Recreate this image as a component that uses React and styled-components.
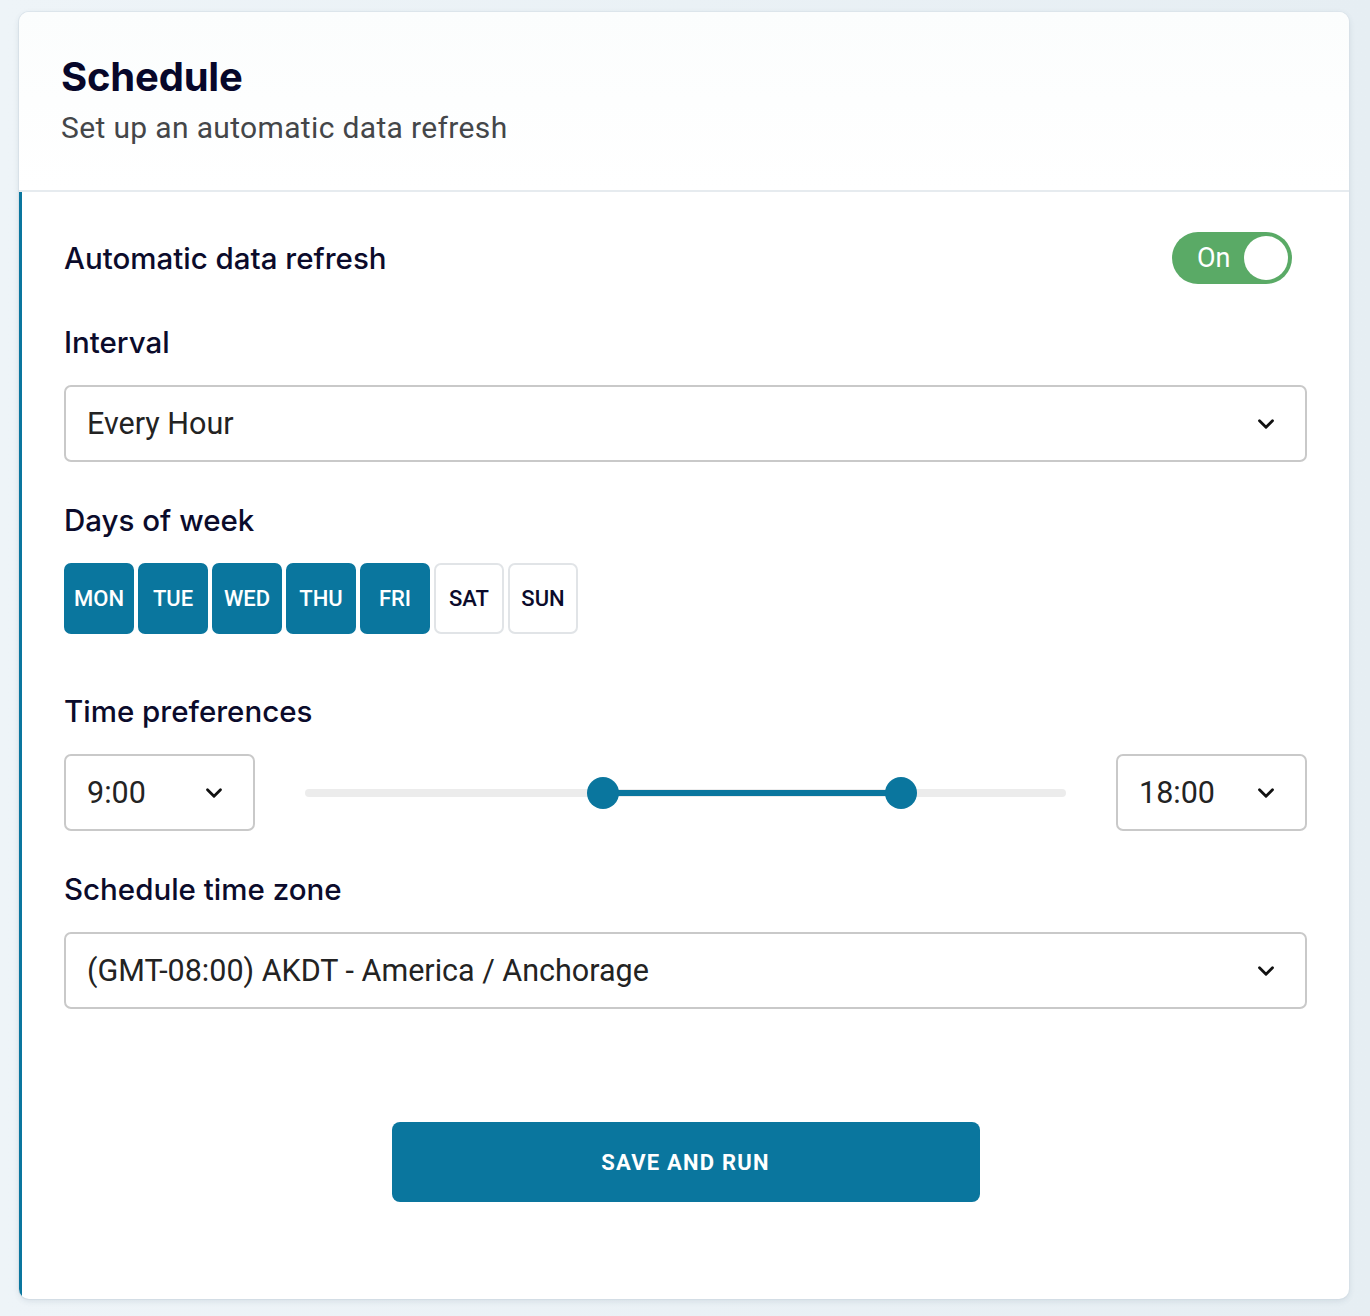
import React from "react";
import styled, { createGlobalStyle } from "styled-components";
import { ChevronDown } from "lucide-react";

const GlobalStyle = createGlobalStyle`
  html, body { margin: 0; padding: 0; }
  body {
    background: linear-gradient(90deg, #eef4f8 0%, #e6eef3 100%);
    font-family: Roboto, "Noto Sans", sans-serif;
  }
  * { box-sizing: border-box; }
`;

const Page = styled.div`
  padding: 12px 21px 18px 19px;
`;

const Card = styled.div`
  background: #ffffff;
  border-radius: 10px;
  box-shadow: 0 2px 6px rgba(40, 70, 100, 0.12), 0 0 0 1px #e2eaf0;
  overflow: hidden;
`;

const Header = styled.div`
  padding: 40px 42px 36px 42px;
  border-bottom: 2px solid #e6ebef;
  background: linear-gradient(180deg, #fbfdfd 0%, #ffffff 100%);
`;

const Title = styled.h1`
  margin: 0;
  font-family: Inter, sans-serif;
  font-weight: 700;
  font-size: 40px;
  line-height: 50px;
  color: #07072a;
  letter-spacing: -0.2px;
`;

const Subtitle = styled.p`
  margin: 0;
  font-family: Roboto, sans-serif;
  font-size: 30px;
  letter-spacing: 0.35px;
  line-height: 52px;
  color: #444649;
`;

const Body = styled.div`
  border-left: 3px solid #0a769e;
  padding: 40px 42px 97px 42px;
  display: flex;
  flex-direction: column;
`;

const ToggleRow = styled.div`
  display: flex;
  align-items: center;
  justify-content: space-between;
`;

const Label = styled.div`
  font-family: Inter, sans-serif;
  font-weight: 500;
  font-size: 29.5px;
  line-height: 34px;
  color: #0b0b2b;
  margin-top: ${(p) => p.$mt || 0}px;
  margin-bottom: ${(p) => (p.$mb === undefined ? 26 : p.$mb)}px;
`;

const Toggle = styled.div`
  width: 120px;
  height: 52px;
  border-radius: 26px;
  background: #5aaa66;
  display: flex;
  align-items: center;
  justify-content: space-between;
  padding: 0 4px 0 25px;
  margin-right: 15px;
`;

const ToggleText = styled.span`
  font-family: Roboto, sans-serif;
  font-size: 27px;
  color: #ffffff;
  line-height: 1;
`;

const Knob = styled.span`
  width: 44px;
  height: 44px;
  border-radius: 50%;
  background: #ffffff;
`;

const Select = styled.div`
  display: flex;
  align-items: center;
  justify-content: space-between;
  height: 77px;
  width: ${(p) => (p.$w ? `${p.$w}px` : "100%")};
  flex-shrink: 0;
  border: 2px solid #c9c9c9;
  border-radius: 7px;
  padding: 0 26px 0 21px;
  background: #ffffff;
  font-family: Roboto, sans-serif;
  font-size: 30.5px;
  color: #232323;
`;

const Days = styled.div`
  display: flex;
  gap: 4px;
`;

const Day = styled.button`
  width: 70px;
  height: 71px;
  border-radius: 7px;
  border: 2px solid ${(p) => (p.$on ? "#0a769e" : "#e1e4e7")};
  background: ${(p) => (p.$on ? "#0a769e" : "#ffffff")};
  color: ${(p) => (p.$on ? "#ffffff" : "#0b0b2b")};
  font-family: Roboto, sans-serif;
  font-weight: 500;
  font-size: 22px;
  padding: 0;
  cursor: pointer;
`;

const TimeRow = styled.div`
  display: flex;
  align-items: center;
  gap: 50px;
`;

const Track = styled.div`
  position: relative;
  flex: 1;
  height: 8px;
  border-radius: 4px;
  background: #ececec;
`;

const Range = styled.div`
  position: absolute;
  top: 1px;
  height: 6px;
  background: #0a769e;
`;

const Thumb = styled.div`
  position: absolute;
  top: 50%;
  width: 32px;
  height: 32px;
  margin: -16px 0 0 -16px;
  border-radius: 50%;
  background: #0a769e;
`;

const ButtonRow = styled.div`
  display: flex;
  justify-content: center;
  margin-top: 113px;
`;

const PrimaryButton = styled.button`
  width: 588px;
  height: 80px;
  border: none;
  border-radius: 8px;
  background: #0a769e;
  color: #ffffff;
  font-family: Roboto, sans-serif;
  font-weight: 700;
  font-size: 22px;
  letter-spacing: 1.2px;
  cursor: pointer;
`;

const Chevron = () => <ChevronDown size={26} strokeWidth={2.6} color="#111" />;

const days = [
  ["MON", true],
  ["TUE", true],
  ["WED", true],
  ["THU", true],
  ["FRI", true],
  ["SAT", false],
  ["SUN", false],
];

export default function App() {
  const min = 0;
  const max = 23;
  const start = 9;
  const end = 18;
  const a = ((start - min) / (max - min)) * 100;
  const b = ((end - min) / (max - min)) * 100;
  return (
    <>
      <GlobalStyle />
      <Page>
        <Card>
          <Header>
            <Title>Schedule</Title>
            <Subtitle>Set up an automatic data refresh</Subtitle>
          </Header>
          <Body>
            <ToggleRow>
              <Label $mb={0}>Automatic data refresh</Label>
              <Toggle>
                <ToggleText>On</ToggleText>
                <Knob />
              </Toggle>
            </ToggleRow>

            <Label $mt={41}>Interval</Label>
            <Select>
              <span>Every Hour</span>
              <Chevron />
            </Select>

            <Label $mt={41}>Days of week</Label>
            <Days>
              {days.map(([d, on]) => (
                <Day key={d} $on={on}>
                  {d}
                </Day>
              ))}
            </Days>

            <Label $mt={60}>Time preferences</Label>
            <TimeRow>
              <Select $w={191}>
                <span>9:00</span>
                <Chevron />
              </Select>
              <Track>
                <Range style={{ left: `${a}%`, width: `${b - a}%` }} />
                <Thumb style={{ left: `${a}%` }} />
                <Thumb style={{ left: `${b}%` }} />
              </Track>
              <Select $w={191}>
                <span>18:00</span>
                <Chevron />
              </Select>
            </TimeRow>

            <Label $mt={41}>Schedule time zone</Label>
            <Select>
              <span>(GMT-08:00) AKDT - America / Anchorage</span>
              <Chevron />
            </Select>

            <ButtonRow>
              <PrimaryButton>SAVE AND RUN</PrimaryButton>
            </ButtonRow>
          </Body>
        </Card>
      </Page>
    </>
  );
}
